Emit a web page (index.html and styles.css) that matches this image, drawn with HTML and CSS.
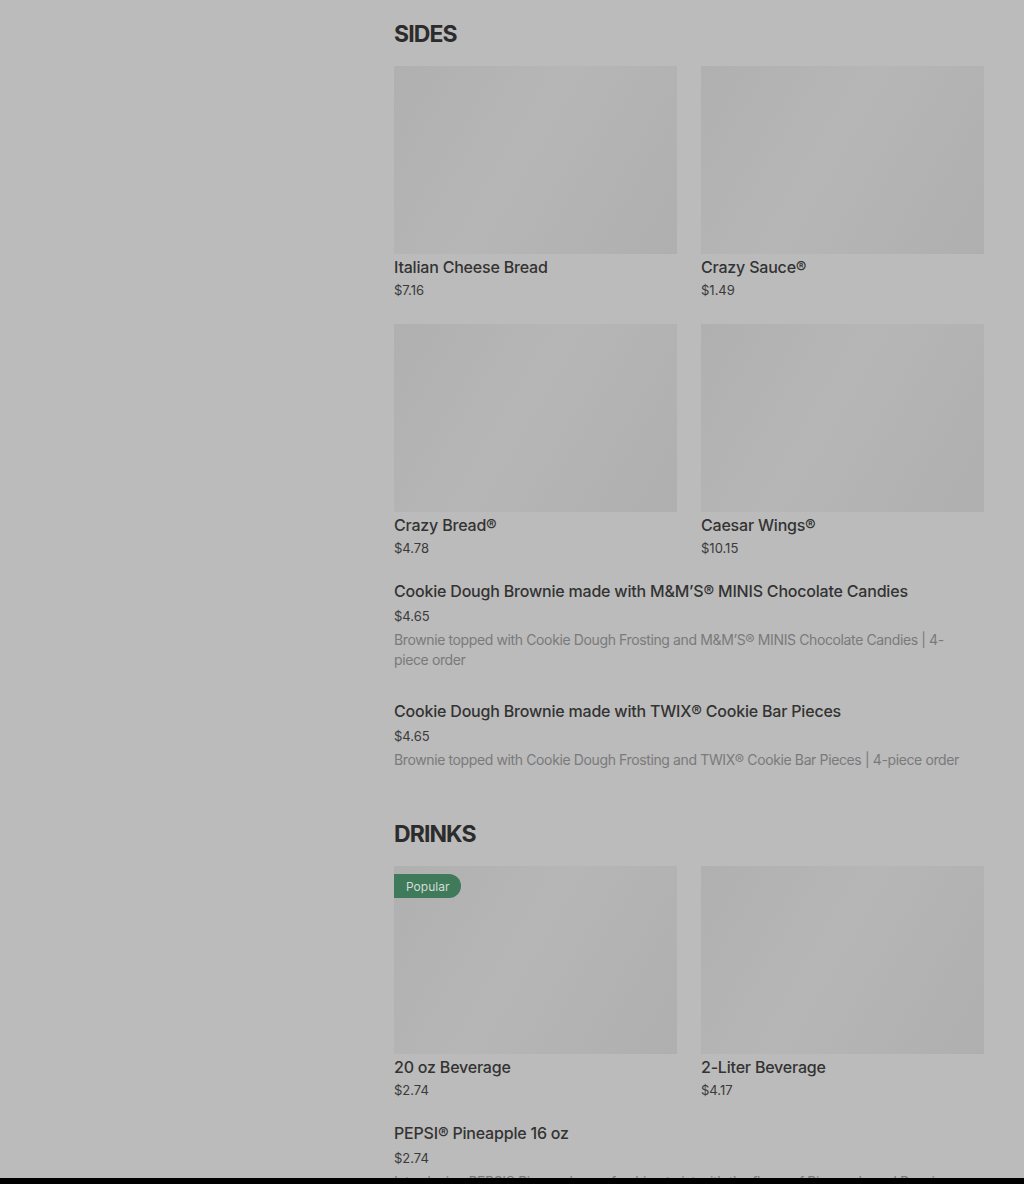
FILE: index.html
```html
<!DOCTYPE html>
<html lang="en">
<head>
<meta charset="utf-8">
<title>Menu</title>
<link rel="stylesheet" href="styles.css">
</head>
<body>
<div class="page">
  <aside class="sidebar"></aside>
  <main class="content">
    <section class="section">
      <h2 class="section-title">SIDES</h2>
      <div class="grid">
        <div class="card">
          <div class="thumb"></div>
          <div class="item-title">Italian Cheese Bread</div>
          <div class="price">$7.16</div>
        </div>
        <div class="card">
          <div class="thumb"></div>
          <div class="item-title">Crazy Sauce®</div>
          <div class="price">$1.49</div>
        </div>
        <div class="card">
          <div class="thumb"></div>
          <div class="item-title">Crazy Bread®</div>
          <div class="price">$4.78</div>
        </div>
        <div class="card">
          <div class="thumb"></div>
          <div class="item-title">Caesar Wings®</div>
          <div class="price">$10.15</div>
        </div>
      </div>
      <div class="list-item first">
        <div class="item-title">Cookie Dough Brownie made with M&amp;M’S® MINIS Chocolate Candies</div>
        <div class="price">$4.65</div>
        <div class="desc">Brownie topped with Cookie Dough Frosting and M&amp;M’S® MINIS Chocolate Candies | 4-piece order</div>
      </div>
      <div class="list-item">
        <div class="item-title">Cookie Dough Brownie made with TWIX® Cookie Bar Pieces</div>
        <div class="price">$4.65</div>
        <div class="desc">Brownie topped with Cookie Dough Frosting and TWIX® Cookie Bar Pieces | 4-piece order</div>
      </div>
    </section>
    <section class="section drinks">
      <h2 class="section-title">DRINKS</h2>
      <div class="grid">
        <div class="card">
          <div class="thumb"><span class="badge">Popular</span></div>
          <div class="item-title">20 oz Beverage</div>
          <div class="price">$2.74</div>
        </div>
        <div class="card">
          <div class="thumb"></div>
          <div class="item-title">2-Liter Beverage</div>
          <div class="price">$4.17</div>
        </div>
      </div>
      <div class="list-item first">
        <div class="item-title">PEPSI® Pineapple 16 oz</div>
        <div class="price">$2.74</div>
        <div class="desc">Introducing PEPSI® Pineapple, a refreshing twist with the flavor of Pineapple and Pepsi cola.</div>
      </div>
    </section>
  </main>
</div>
<div class="bottom-bar"></div>
</body>
</html>
```
FILE: styles.css
```css
* { box-sizing: border-box; }
html, body {
  margin: 0;
  padding: 0;
  background: #bbbbbb;
  height: 100%;
  overflow: hidden;
}
body {
  font-family: "Inter", "Noto Sans", sans-serif;
  color: #2f2f2f;
}
.page {
  display: flex;
}
.sidebar {
  flex: 0 0 394px;
}
.content {
  flex: 0 0 590px;
  padding-top: 18px;
}
.section-title {
  margin: 0;
  font-size: 23px;
  line-height: 32px;
  font-weight: 700;
  letter-spacing: -0.9px;
  color: #2c2c2c;
}
.grid {
  margin-top: 16px;
  display: grid;
  grid-template-columns: 1fr 1fr;
  column-gap: 24px;
  row-gap: 24px;
}
.thumb {
  position: relative;
  height: 188px;
  background: linear-gradient(120deg, #b0b0b0 0%, #b6b6b6 45%, #afafaf 100%);
}
.item-title {
  margin-top: 1px;
  font-size: 16px;
  line-height: 24px;
  font-weight: 500;
  letter-spacing: -0.2px;
  color: #333333;
}
.price {
  font-size: 13px;
  line-height: 20px;
  color: #3a3a3a;
}
.card .price { margin-top: 1px; }
.list-item { margin-top: 29px; }
.list-item.first { margin-top: 21px; }
.list-item .price { margin-top: 3px; }
.desc {
  margin-top: 4px;
  max-width: 572px;
  font-size: 14px;
  line-height: 20px;
  letter-spacing: -0.38px;
  color: #7a7a7a;
}
.drinks { margin-top: 48px; }
.badge {
  position: absolute;
  left: 0;
  top: 8px;
  height: 24px;
  padding: 0 12px;
  display: flex;
  align-items: center;
  background: #3f7a5a;
  color: #d4dcd7;
  font-size: 12px;
  border-radius: 0 12px 12px 0;
}
.bottom-bar {
  position: fixed;
  left: 0;
  right: 0;
  bottom: 0;
  height: 6px;
  background: #000;
}
```
